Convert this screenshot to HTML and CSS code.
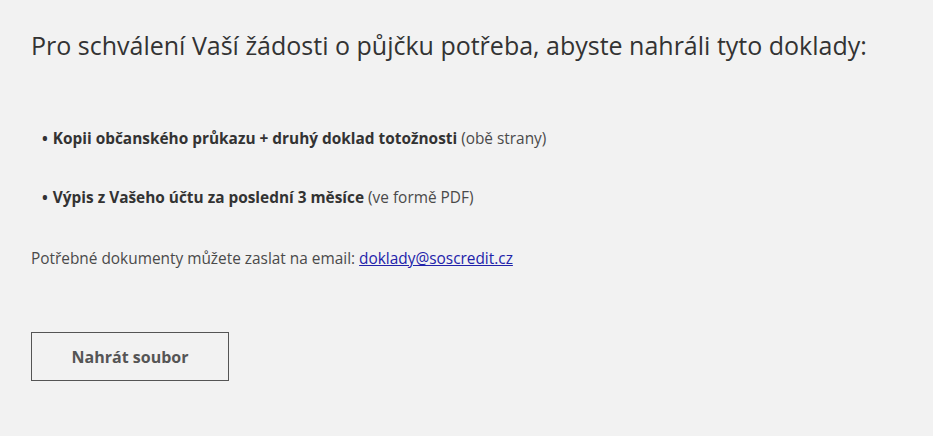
FILE: index.html
```html
<!DOCTYPE html>
<html lang="cs">
<head>
<meta charset="utf-8">
<link rel="stylesheet" href="styles.css">
</head>
<body>
<main class="page">
  <h1 class="title">Pro schválení Vaší žádosti o půjčku potřeba, abyste nahráli tyto doklady:</h1>
  <ul class="docs">
    <li><strong>Kopii občanského průkazu + druhý doklad totožnosti</strong> (obě strany)</li>
    <li><strong>Výpis z Vašeho účtu za poslední 3 měsíce</strong> (ve formě PDF)</li>
  </ul>
  <p class="note">Potřebné dokumenty můžete zaslat na email: <a href="#">doklady@soscredit.cz</a></p>
  <button class="upload" type="button">Nahrát soubor</button>
</main>
</body>
</html>
```
FILE: styles.css
```css
html, body {
  margin: 0;
  background: #f2f2f2;
}
body {
  font-family: "Open Sans", "DejaVu Sans", sans-serif;
  color: #333;
}
.page {
  padding: 25px 31px;
}
.title {
  margin: 0;
  font-size: 25px;
  font-weight: 400;
  line-height: 40px;
  color: #333;
}
.docs {
  list-style: none;
  margin: 63px 0 0;
  padding: 0 0 0 11px;
  display: flex;
  flex-direction: column;
  gap: 38px;
}
.docs li {
  font-size: 15.4px;
  line-height: 21px;
  color: #4a4a4a;
}
.docs li::before {
  content: "•";
  font-weight: 700;
  margin-right: 5px;
  color: #333;
}
.docs strong {
  font-weight: 700;
  color: #333;
}
.note {
  margin: 40px 0 0;
  font-size: 15.4px;
  line-height: 21px;
  color: #4a4a4a;
}
.note a {
  color: #2222aa;
}
.upload {
  display: block;
  margin-top: 63px;
  width: 198px;
  height: 49px;
  background: transparent;
  border: 1px solid #555;
  font-family: inherit;
  font-size: 16px;
  font-weight: 700;
  color: #555;
}
```
